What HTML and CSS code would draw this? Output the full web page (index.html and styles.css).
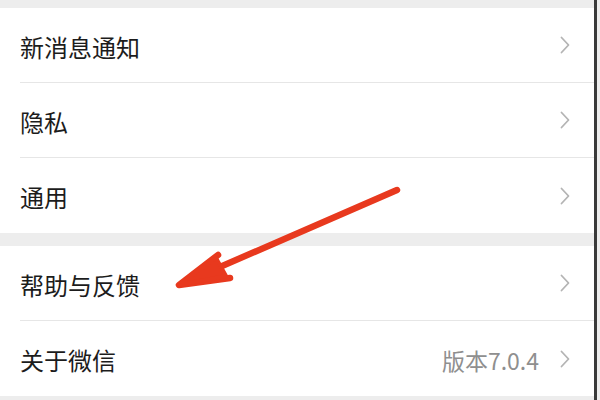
FILE: index.html
```html
<!DOCTYPE html>
<html lang="zh-CN">
<head>
<meta charset="utf-8">
<link rel="stylesheet" href="styles.css">
</head>
<body>
<div class="screen">
  <div class="group">
    <div class="row"><div class="cell"><span class="label">新消息通知</span><svg class="chev" viewBox="0 0 10 18" width="10" height="18"><polyline points="1.5,1.5 8.5,9 1.5,16.5"/></svg></div></div>
    <div class="row"><div class="cell"><span class="label">隐私</span><svg class="chev" viewBox="0 0 10 18" width="10" height="18"><polyline points="1.5,1.5 8.5,9 1.5,16.5"/></svg></div></div>
    <div class="row"><div class="cell last"><span class="label">通用</span><svg class="chev" viewBox="0 0 10 18" width="10" height="18"><polyline points="1.5,1.5 8.5,9 1.5,16.5"/></svg></div></div>
  </div>
  <div class="group">
    <div class="row"><div class="cell"><span class="label">帮助与反馈</span><svg class="chev" viewBox="0 0 10 18" width="10" height="18"><polyline points="1.5,1.5 8.5,9 1.5,16.5"/></svg></div></div>
    <div class="row"><div class="cell last"><span class="label">关于微信</span><span class="value">版本7.0.4</span><svg class="chev" viewBox="0 0 10 18" width="10" height="18"><polyline points="1.5,1.5 8.5,9 1.5,16.5"/></svg></div></div>
  </div>
  <svg class="arrow" viewBox="0 0 600 400" width="600" height="400">
    <g fill="none" stroke="#e8391e" stroke-width="6.5" stroke-linecap="round" stroke-linejoin="round">
      <line x1="397" y1="190" x2="190" y2="280"/>
      <polyline points="218,255 179,285 230,278"/>
    </g>
    <polygon points="179,285 216,258 226,276" fill="#e8391e" stroke="#e8391e" stroke-width="4" stroke-linejoin="round"/>
  </svg>
</div>
</body>
</html>
```

FILE: styles.css
```css
html, body {
  margin: 0;
  padding: 0;
}
body {
  background: #ededed;
  font-family: "Noto Sans CJK SC", "Noto Sans", sans-serif;
}
.screen {
  position: relative;
  width: 597px;
  height: 400px;
  border-right: 3px solid #3a3a3a;
  padding-top: 8px;
  box-sizing: border-box;
  display: flex;
  flex-direction: column;
  gap: 13px;
  overflow: hidden;
}
.group {
  background: #fff;
  display: flex;
  flex-direction: column;
}
.row {
  padding-left: 20px;
  height: 75px;
  box-sizing: border-box;
}
.cell {
  height: 100%;
  display: flex;
  align-items: center;
  border-bottom: 1px solid #e6e6e6;
  padding-right: 24px;
  box-sizing: border-box;
}
.cell.last {
  border-bottom: none;
}
.label {
  flex: 1;
  font-size: 24px;
  color: #1c1c1c;
  padding-top: 2px;
}
.value {
  font-size: 23px;
  color: #8f8f8f;
  margin-right: 21px;
  padding-top: 2px;
}
.chev {
  display: block;
}
.chev polyline {
  fill: none;
  stroke: #b4b4b4;
  stroke-width: 1.8;
  stroke-linecap: round;
  stroke-linejoin: round;
}
.arrow {
  position: absolute;
  left: 0;
  top: 0;
  pointer-events: none;
}
```
